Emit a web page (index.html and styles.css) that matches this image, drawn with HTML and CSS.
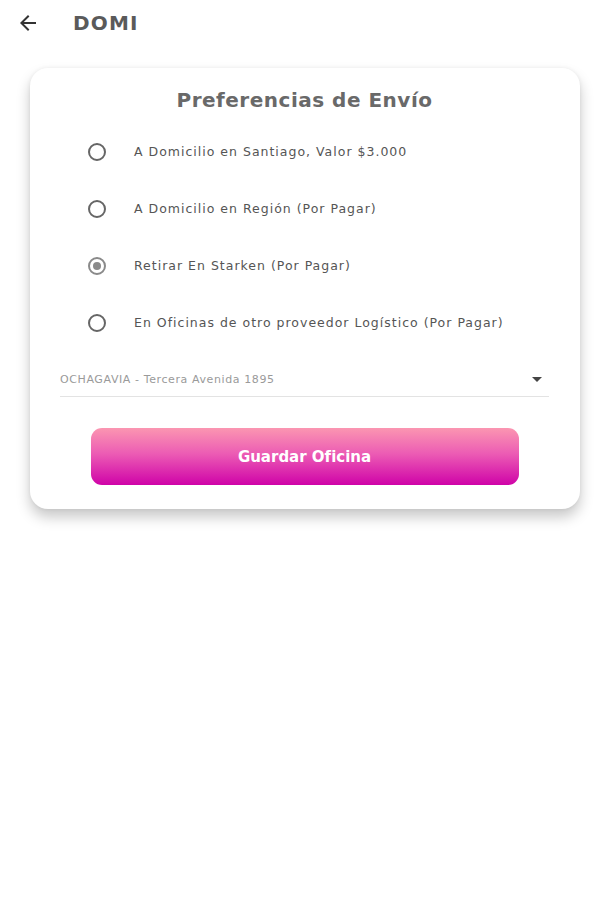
FILE: index.html
```html
<!DOCTYPE html>
<html lang="es">
<head>
<meta charset="utf-8">
<link rel="stylesheet" href="styles.css">
</head>
<body>
<header class="topbar">
  <svg class="back" width="24" height="24" viewBox="0 0 24 24"><path d="M20 11H7.83l5.59-5.59L12 4l-8 8 8 8 1.41-1.41L7.83 13H20v-2z" fill="#333"/></svg>
  <span class="brand">DOMI</span>
</header>
<main class="card">
  <h1 class="title">Preferencias de Envío</h1>
  <ul class="options">
    <li class="option"><span class="radio"></span><span class="label">A Domicilio en Santiago, Valor $3.000</span></li>
    <li class="option"><span class="radio"></span><span class="label">A Domicilio en Región (Por Pagar)</span></li>
    <li class="option"><span class="radio checked"></span><span class="label">Retirar En Starken (Por Pagar)</span></li>
    <li class="option"><span class="radio"></span><span class="label">En Oficinas de otro proveedor Logístico (Por Pagar)</span></li>
  </ul>
  <div class="select">
    <span class="select-text">OCHAGAVIA - Tercera Avenida 1895</span>
    <svg class="caret" width="10" height="5" viewBox="0 0 10 5"><path d="M0 0h10L5 5z" fill="#444"/></svg>
  </div>
  <button class="save">Guardar Oficina</button>
</main>
</body>
</html>
```
FILE: styles.css
```css
* { box-sizing: border-box; }
html, body { margin: 0; padding: 0; background: #fff; }
body { font-family: "DejaVu Sans", "Noto Sans", sans-serif; width: 608px; height: 900px; }
.topbar { display: flex; align-items: center; height: 46px; padding-left: 16px; }
.back { display: block; }
.brand { margin-left: 33px; font-size: 20px; font-weight: bold; color: #5a5a5a; letter-spacing: 1.2px; }
.card {
  margin: 22px 28px 0 30px;
  width: 550px;
  background: #fff;
  border-radius: 18px;
  box-shadow: 0 8px 14px rgba(0,0,0,0.22), 0 0 4px rgba(0,0,0,0.06);
  padding: 18px 31px 24px 30px;
}
.title { margin: 0; text-align: center; font-size: 20px; line-height: 28px; font-weight: bold; color: #696969; letter-spacing: 0.5px; }
.options { list-style: none; margin: 9px 0 0 0; padding: 0 0 0 28px; }
.option { display: flex; align-items: center; height: 57px; }
.radio { width: 18px; height: 18px; border: 2px solid #666; border-radius: 50%; flex: none; display: flex; align-items: center; justify-content: center; }
.radio.checked { border-color: #8a8a8a; }
.radio.checked::after { content: ""; width: 8px; height: 8px; border-radius: 50%; background: #8a8a8a; }
.label { margin-left: 28px; font-size: 12.5px; color: #555; letter-spacing: 1px; }
.select { display: flex; align-items: center; justify-content: space-between; height: 34px; margin-top: 12px; border-bottom: 1px solid #e3e3e3; padding-right: 7px; }
.select-text { font-size: 11px; color: #9a9a9a; letter-spacing: 0.6px; }
.caret { display: block; }
.save {
  display: block;
  margin: 31px auto 0;
  width: 428px;
  height: 57px;
  border: 0;
  border-radius: 11px;
  background: linear-gradient(#fb96b1, #ec5cb4 45%, #cf03a8);
  color: #fff;
  font-family: inherit;
  font-size: 15px;
  font-weight: bold;
}
```
